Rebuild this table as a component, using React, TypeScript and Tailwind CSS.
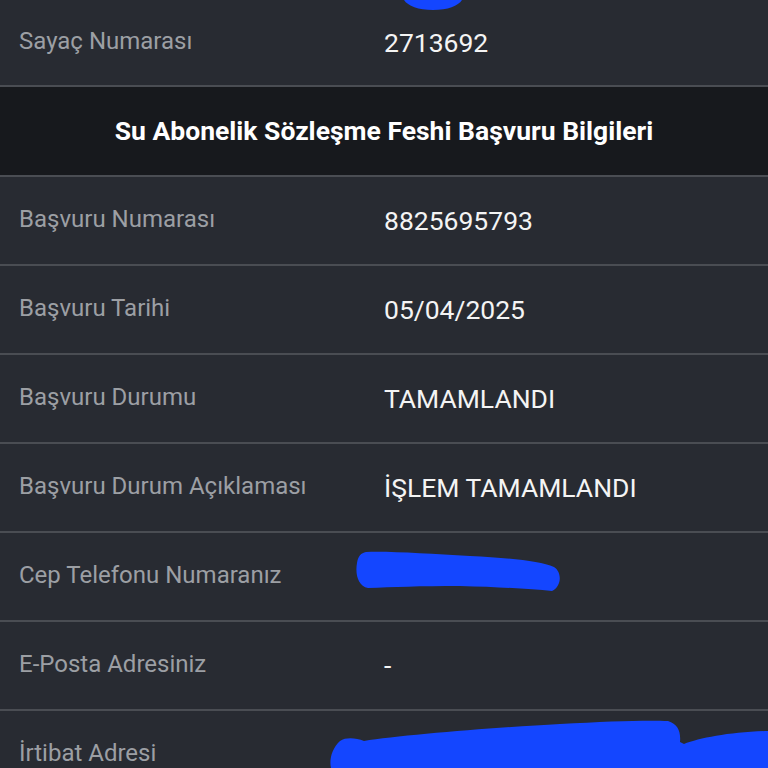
import React from 'react';

interface Row {
  label: string;
  value: string;
}

const rows: Row[] = [
  { label: 'Başvuru Numarası', value: '8825695793' },
  { label: 'Başvuru Tarihi', value: '05/04/2025' },
  { label: 'Başvuru Durumu', value: 'TAMAMLANDI' },
  { label: 'Başvuru Durum Açıklaması', value: 'İŞLEM TAMAMLANDI' },
  { label: 'Cep Telefonu Numaranız', value: '' },
  { label: 'E-Posta Adresiniz', value: '-' },
  { label: 'İrtibat Adresi', value: '' },
];

const InfoRow: React.FC<Row & { className?: string }> = ({ label, value, className }) => (
  <div className={`flex items-center border-b-2 border-[#4a4d53] ${className ?? 'h-[89px]'}`}>
    <div className="w-[384px] pl-[19px] pb-1 text-[24px] text-[#9c9fa4]">{label}</div>
    <div className="text-[26.5px] text-[#f4f4f4]">{value}</div>
  </div>
);

const App: React.FC = () => {
  return (
    <div className="relative h-[768px] w-[768px] overflow-hidden bg-[#282b32] font-['Roboto',sans-serif]">
      {/* Previous section tail */}
      <InfoRow label="Sayaç Numarası" value="2713692" className="h-[87px]" />

      {/* Section header */}
      <div className="flex h-[90px] items-center justify-center border-b-2 border-[#4a4d53] bg-[#17191d]">
        <h2 className="text-[26.5px] font-bold text-white">Su Abonelik Sözleşme Feshi Başvuru Bilgileri</h2>
      </div>

      {rows.map(r => (
        <InfoRow key={r.label} label={r.label} value={r.value} />
      ))}

      {/* Redaction scribbles */}
      <svg className="absolute left-0 top-0 h-[768px] w-[768px]" viewBox="0 0 768 768">
        <path d="M404 0 L462 0 C458 6 448 10 433 10 C418 10 408 6 404 0 Z" fill="#1446ff" />
        <path
          d="M366 552 C390 551 430 554 470 556 C510 558 540 561 554 567 C562 572 562 586 552 591 C530 589 500 587 460 586 C420 586 392 587 368 588 C358 586 355 574 357 563 C358 556 361 553 366 552 Z"
          fill="#1446ff"
        />
        <path
          d="M340 741 C346 737 356 738 364 741 C400 735 500 727 560 724 C610 721 650 720 668 721 C678 724 681 732 680 742 L684 744 C700 738 730 732 768 731 L768 768 L331 768 C329 760 332 748 340 741 Z"
          fill="#1446ff"
        />
      </svg>
    </div>
  );
};

export default App;
